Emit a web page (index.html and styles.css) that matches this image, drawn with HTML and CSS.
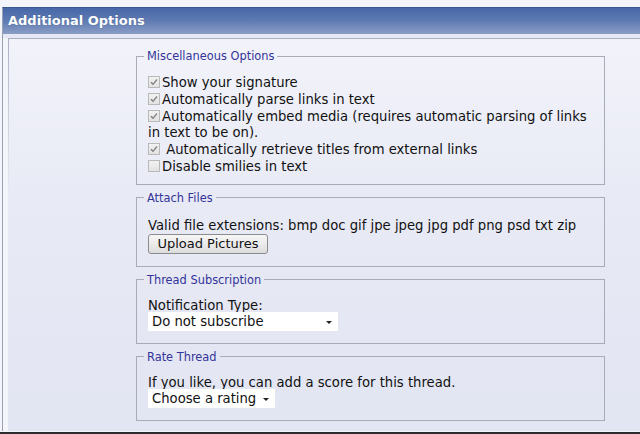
FILE: index.html
```html
<!DOCTYPE html>
<html lang="en">
<head>
<meta charset="utf-8">
<title>Additional Options</title>
<link rel="stylesheet" href="styles.css">
</head>
<body>
<div class="panel">
  <div class="head">Additional Options</div>
  <div class="strip"></div>
  <div class="inner">
    <form class="form">
      <fieldset class="group misc">
        <legend>Miscellaneous Options</legend>
        <div class="row"><span class="cb on"><svg viewBox="0 0 12 12" width="12" height="12"><path d="M3 6.2 L5 8.3 L9 3.5" fill="none" stroke="#7f7f7f" stroke-width="1.3"/></svg></span>Show your signature</div>
        <div class="row"><span class="cb on"><svg viewBox="0 0 12 12" width="12" height="12"><path d="M3 6.2 L5 8.3 L9 3.5" fill="none" stroke="#7f7f7f" stroke-width="1.3"/></svg></span>Automatically parse links in text</div>
        <div class="row"><span class="cb on"><svg viewBox="0 0 12 12" width="12" height="12"><path d="M3 6.2 L5 8.3 L9 3.5" fill="none" stroke="#7f7f7f" stroke-width="1.3"/></svg></span>Automatically embed media (requires automatic parsing of links in text to be on).</div>
        <div class="row"><span class="cb on"><svg viewBox="0 0 12 12" width="12" height="12"><path d="M3 6.2 L5 8.3 L9 3.5" fill="none" stroke="#7f7f7f" stroke-width="1.3"/></svg></span> Automatically retrieve titles from external links</div>
        <div class="row"><span class="cb"></span>Disable smilies in text</div>
      </fieldset>
      <fieldset class="group attach">
        <legend>Attach Files</legend>
        <div class="row">Valid file extensions: bmp doc gif jpe jpeg jpg pdf png psd txt zip</div>
        <button type="button" class="btn">Upload Pictures</button>
      </fieldset>
      <fieldset class="group">
        <legend>Thread Subscription</legend>
        <div class="row">Notification Type:</div>
        <div class="select wide">Do not subscribe<span class="arrow"></span></div>
      </fieldset>
      <fieldset class="group">
        <legend>Rate Thread</legend>
        <div class="row">If you like, you can add a score for this thread.</div>
        <div class="select narrow">Choose a rating<span class="arrow"></span></div>
      </fieldset>
    </form>
  </div>
</div>
<div class="bottomline"></div>
</body>
</html>
```

FILE: styles.css
```css
html, body {
  margin: 0;
  padding: 0;
}
body {
  background: #f4f5fa;
  width: 640px;
  height: 434px;
  overflow: hidden;
  font-family: "DejaVu Sans", Verdana, sans-serif;
  color: #111;
}
.panel {
  margin: 7px 0 0 2px;
  border-left: 1px solid #9aa1b4;
  border-top: 1px solid #3d5890;
}
.head {
  height: 26px;
  line-height: 26px;
  padding-left: 5px;
  background: linear-gradient(to bottom, #4767a8 0%, #5f7bb3 50%, #8a9dc5 100%);
  color: #fff;
  font-weight: bold;
  font-size: 13px;
  text-shadow: 0 0 1px rgba(40, 60, 110, 0.5);
}
.strip {
  height: 4px;
  background: #e6e9f5;
}
.inner {
  margin-left: 5px;
  height: 393px;
  border-style: solid;
  border-width: 1px 0 0 1px;
  border-image: linear-gradient(to bottom, #aab0c2, rgba(170, 176, 194, 0) 40%) 1;
  background: linear-gradient(to bottom, #f2f3fa 0%, #e8eaf5 40%, #e2e5f2 100%);
  box-sizing: border-box;
}
.form {
  margin: 0 0 0 127px;
  padding-top: 10px;
  width: 469px;
}
.group {
  margin: 0 0 6px 0;
  padding: 11px 11px 12px 11px;
  border: 1px solid #a9abb8;
  min-width: 0;
}
.group.misc {
  padding-top: 12px;
  padding-bottom: 8px;
}
.group.attach {
  padding-top: 13px;
}
.group legend {
  font-size: 11.4px;
  line-height: 14px;
  color: #34349a;
  padding: 0 3px;
  margin-left: -4px;
}
.row {
  font-size: 13.2px;
  line-height: 16px;
}
.misc .row {
  line-height: 16.8px;
}
.cb {
  display: inline-block;
  width: 12px;
  height: 12px;
  box-sizing: border-box;
  border: 1px solid #b9b9b9;
  background: linear-gradient(to bottom, #f2f2f2, #e2e2e2);
  vertical-align: -1px;
  margin-right: 2px;
  position: relative;
}
.cb svg {
  position: absolute;
  left: -1px;
  top: -1px;
}
.btn {
  display: block;
  margin-top: 0;
  width: 120px;
  height: 20px;
  padding: 0;
  font-family: "DejaVu Sans", Verdana, sans-serif;
  font-size: 13px;
  color: #111;
  border: 1px solid #8c8c8c;
  border-radius: 3px;
  background: linear-gradient(to bottom, #f6f6f6 0%, #ebebeb 50%, #dcdcdc 100%);
}
.select {
  position: relative;
  height: 19px;
  line-height: 19px;
  margin-top: -2px;
  padding-left: 4px;
  background: #fff;
  font-size: 13.2px;
  box-sizing: border-box;
}
.select.wide { width: 190px; }
.select.narrow { width: 127px; }
.arrow {
  position: absolute;
  right: 6px;
  top: 9px;
  width: 0;
  height: 0;
  border-left: 3px solid transparent;
  border-right: 3px solid transparent;
  border-top: 3px solid #222;
}
.bottomline {
  position: absolute;
  left: 0;
  top: 432px;
  width: 640px;
  height: 2px;
  background: #2b2b30;
}
```
